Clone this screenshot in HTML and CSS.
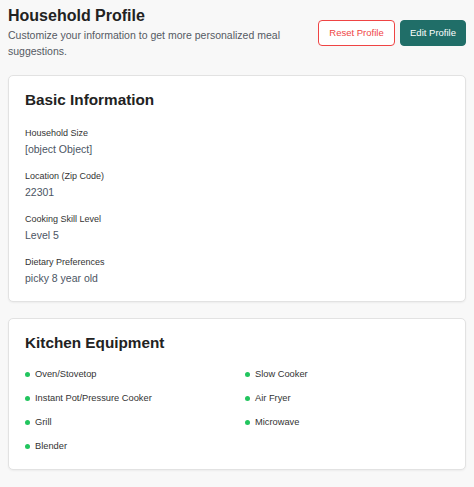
FILE: index.html
```html
<!DOCTYPE html>
<html>
<head>
<meta charset="utf-8">
<link rel="stylesheet" href="styles.css">
</head>
<body>
<div class="page">
  <header class="header">
    <div class="intro">
      <h1 class="title">Household Profile</h1>
      <p class="subtitle">Customize your information to get more personalized meal suggestions.</p>
    </div>
    <div class="actions">
      <button class="btn btn-reset">Reset Profile</button>
      <button class="btn btn-edit">Edit Profile</button>
    </div>
  </header>

  <section class="card">
    <h2 class="card-title">Basic Information</h2>
    <div class="fields">
      <div class="field">
        <div class="label">Household Size</div>
        <div class="value">[object Object]</div>
      </div>
      <div class="field">
        <div class="label">Location (Zip Code)</div>
        <div class="value">22301</div>
      </div>
      <div class="field">
        <div class="label">Cooking Skill Level</div>
        <div class="value">Level 5</div>
      </div>
      <div class="field">
        <div class="label">Dietary Preferences</div>
        <div class="value">picky 8 year old</div>
      </div>
    </div>
  </section>

  <section class="card">
    <h2 class="card-title">Kitchen Equipment</h2>
    <ul class="equipment">
      <li class="item"><span class="dot"></span>Oven/Stovetop</li>
      <li class="item"><span class="dot"></span>Slow Cooker</li>
      <li class="item"><span class="dot"></span>Instant Pot/Pressure Cooker</li>
      <li class="item"><span class="dot"></span>Air Fryer</li>
      <li class="item"><span class="dot"></span>Grill</li>
      <li class="item"><span class="dot"></span>Microwave</li>
      <li class="item"><span class="dot"></span>Blender</li>
    </ul>
  </section>
</div>
</body>
</html>
```

FILE: styles.css
```css
* { box-sizing: border-box; }
html, body { margin: 0; padding: 0; }
body {
  background: #f8f8f8;
  font-family: "Liberation Sans", Arial, Helvetica, sans-serif;
  color: #222;
}
.page {
  padding: 7px 8px 8px 8px;
  display: flex;
  flex-direction: column;
  gap: 16px;
}
.header {
  display: flex;
  align-items: center;
  justify-content: space-between;
}
.intro { width: 290px; }
.title {
  margin: 0;
  font-size: 16px;
  line-height: 18px;
  font-weight: 700;
  color: #222;
}
.subtitle {
  margin: 2px 0 0 0;
  font-size: 10.5px;
  line-height: 16px;
  color: #555a63;
}
.actions {
  display: flex;
  gap: 5px;
  margin-top: -1px;
}
.btn {
  font-family: inherit;
  font-size: 9.5px;
  height: 26px;
  border-radius: 4px;
  padding: 0;
  white-space: nowrap;
  cursor: pointer;
}
.btn-reset {
  background: #fff;
  color: #ef4444;
  border: 1px solid #ef4444;
  width: 77px;
}
.btn-edit {
  background: #206e68;
  color: #fff;
  border: 1px solid #206e68;
  width: 66px;
}
.card {
  background: #fff;
  border: 1px solid #e2e2e2;
  border-radius: 5px;
  box-shadow: 0 1px 2px rgba(0,0,0,0.05);
  padding: 15px 16px 15px 16px;
}
.card-title {
  margin: 0;
  font-size: 15.3px;
  line-height: 18px;
  font-weight: 700;
  color: #222;
}
.fields {
  margin-top: 16px;
  display: flex;
  flex-direction: column;
  gap: 11px;
}
.label {
  font-size: 9px;
  line-height: 16px;
  color: #333;
}
.value {
  font-size: 10.5px;
  line-height: 16px;
  color: #4b5563;
}
.equipment {
  list-style: none;
  margin: 14px 0 0 0;
  padding: 0;
  display: grid;
  grid-template-columns: 1fr 1fr;
  column-gap: 16px;
  row-gap: 8px;
}
.item {
  display: flex;
  align-items: center;
  font-size: 9.3px;
  line-height: 16px;
  color: #333;
}
.dot {
  width: 5px;
  height: 5px;
  border-radius: 50%;
  background: #22c55e;
  margin-right: 5px;
  flex: none;
}
```
